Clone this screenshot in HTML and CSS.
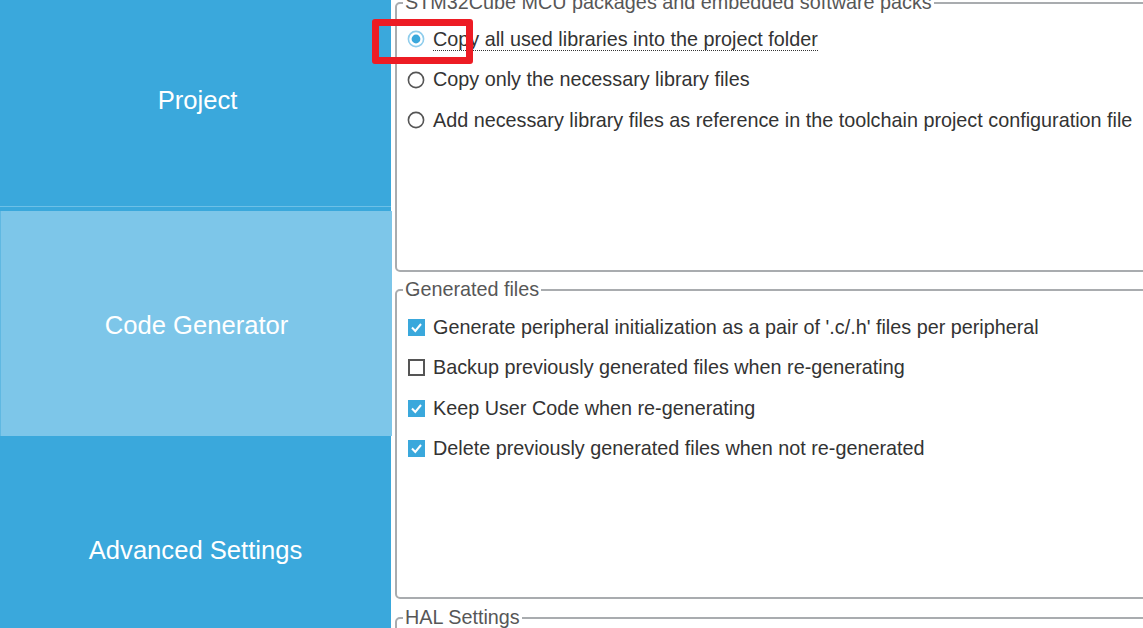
FILE: index.html
```html
<!DOCTYPE html>
<html lang="en">
<head>
  <meta charset="UTF-8" />
  <title>Project Manager - Code Generator</title>
  <link rel="stylesheet" href="styles.css">
</head>
<body>
  <div class="app">
    <nav class="sidebar">
      <div class="tab tab-project">Project</div>
      <div class="tab-gap"></div>
      <div class="tab tab-active">Code Generator</div>
      <div class="tab">Advanced Settings</div>
    </nav>

    <main class="panel">
      <fieldset class="group group-packs">
        <legend>STM32Cube MCU packages and embedded software packs</legend>
        <div class="options">
          <label class="row">
            <svg class="radio" width="18" height="18" viewBox="0 0 18 18"><circle cx="9" cy="9" r="7.6" fill="#fff" stroke="#8fcdec" stroke-width="1.6"/><circle cx="9" cy="9" r="4.4" fill="#3aa8dc"/></svg>
            <span class="focus">Copy all used libraries into the project folder</span>
          </label>
          <label class="row">
            <svg class="radio" width="18" height="18" viewBox="0 0 18 18"><circle cx="9" cy="9" r="7.6" fill="#fff" stroke="#555" stroke-width="1.6"/></svg>
            <span>Copy only the necessary library files</span>
          </label>
          <label class="row">
            <svg class="radio" width="18" height="18" viewBox="0 0 18 18"><circle cx="9" cy="9" r="7.6" fill="#fff" stroke="#555" stroke-width="1.6"/></svg>
            <span>Add necessary library files as reference in the toolchain project configuration file</span>
          </label>
        </div>
      </fieldset>

      <fieldset class="group group-files">
        <legend>Generated files</legend>
        <div class="options">
          <label class="row">
            <span class="check on"><svg width="17" height="17" viewBox="0 0 17 17"><polyline points="4,8.5 7.3,12 13,5" fill="none" stroke="#fff" stroke-width="2"/></svg></span>
            <span>Generate peripheral initialization as a pair of '.c/.h' files per peripheral</span>
          </label>
          <label class="row">
            <span class="check"></span>
            <span>Backup previously generated files when re-generating</span>
          </label>
          <label class="row">
            <span class="check on"><svg width="17" height="17" viewBox="0 0 17 17"><polyline points="4,8.5 7.3,12 13,5" fill="none" stroke="#fff" stroke-width="2"/></svg></span>
            <span>Keep User Code when re-generating</span>
          </label>
          <label class="row">
            <span class="check on"><svg width="17" height="17" viewBox="0 0 17 17"><polyline points="4,8.5 7.3,12 13,5" fill="none" stroke="#fff" stroke-width="2"/></svg></span>
            <span>Delete previously generated files when not re-generated</span>
          </label>
        </div>
      </fieldset>

      <fieldset class="group group-hal">
        <legend>HAL Settings</legend>
        <div class="options"></div>
      </fieldset>
    </main>
  </div>

  <!-- annotation box -->
  <div class="highlight"></div>
</body>
</html>
```

FILE: styles.css
```css
:root {
  --blue: #3aa8dc;
  --blue-light: #7dc6e9;
  --text: #333;
  --legend: #575757;
  --border: #a9acaf;
}

body {
  margin: 0;
  font-family: "Liberation Sans", Arial, sans-serif;
  background: #fff;
  color: var(--text);
  overflow: hidden;
  position: relative;
}

.app {
  display: flex;
  height: 628px;
}

/* Sidebar */
.sidebar {
  width: 392px;
  flex-shrink: 0;
  display: flex;
  flex-direction: column;
}

.tab {
  width: 391px;
  height: 225px;
  flex-shrink: 0;
  background: var(--blue);
  color: #fff;
  font-size: 25.6px;
  display: flex;
  align-items: center;
  justify-content: center;
  box-sizing: border-box;
  padding-top: 4px;
}

.tab-project {
  height: 207px;
  padding-top: 0;
  padding-bottom: 6px;
  padding-left: 4px;
  border-bottom: 1px solid #6dc0e7;
}

.tab-gap {
  width: 391px;
  height: 4px;
  background: var(--blue);
  flex-shrink: 0;
}

.tab-active {
  width: 392px;
  background: var(--blue-light);
  border-left: 1px solid #5fb8e2;
}

/* Right panel */
.panel {
  flex: 1;
  overflow: hidden;
  padding-left: 3px;
  margin-top: -9px;
}

.group {
  width: 900px;
  margin: 0;
  padding: 5px 6px 0;
  border: 2px solid var(--border);
  border-radius: 5px;
  font-size: 19.8px;
}

.group legend {
  color: var(--legend);
  padding: 0 2px;
  line-height: 23px;
}

.group-packs .options { height: 251px; }

.group-files {
  margin-top: 6px;
  padding-top: 6px;
}
.group-files .options { height: 290px; }

.group-hal { margin-top: 7px; }
.group-hal .options { height: 40px; }

.row {
  display: flex;
  align-items: center;
  gap: 8px;
  height: 40.5px;
  padding-left: 4px;
  white-space: nowrap;
}

.radio { flex-shrink: 0; }

.focus {
  border-bottom: 1px dotted #333;
  line-height: 22px;
}

.check {
  width: 17px;
  height: 17px;
  box-sizing: border-box;
  border: 2px solid #555;
  flex-shrink: 0;
  margin-left: 1px;
}

.check.on {
  border: none;
  background: var(--blue);
}

.check svg { display: block; }

/* Red annotation rectangle over the first option */
.highlight {
  position: absolute;
  left: 372px;
  top: 19px;
  width: 101px;
  height: 45px;
  box-sizing: border-box;
  border: 7px solid #ed1c24;
  border-radius: 3px;
}
```
